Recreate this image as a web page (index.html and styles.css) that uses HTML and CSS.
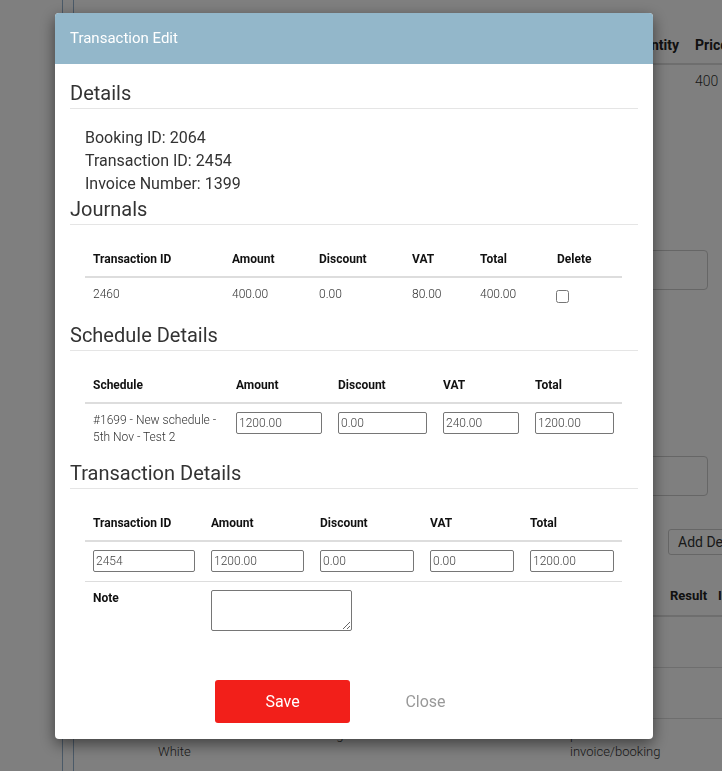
FILE: index.html
```html
<!DOCTYPE html>
<html lang="en">
<head>
    <meta charset="UTF-8">
    <meta name="viewport" content="width=device-width, initial-scale=1.0">
    <title>Transaction Edit</title>
    <link rel="stylesheet" href="styles.css">
</head>
<body>
    <!-- Pagina por tras do modal -->
    <div class="page">
        <div class="rail"></div>
        <div class="rail-inner"></div>
        <div class="content">
            <table class="bg-items">
                <thead>
                    <tr><th>Quantity</th><th>Price</th></tr>
                </thead>
                <tbody>
                    <tr><td></td><td>400</td></tr>
                </tbody>
            </table>
            <div class="side">
                <div class="bg-box"></div>
                <div class="bg-box bg-box-low"></div>
                <button class="bg-button">Add Delivery</button>
            </div>
            <div class="bg-list">
                <div class="bg-row bg-head">
                    <span></span><span></span><span></span><span></span><span>Result</span><span>Info</span>
                </div>
                <div class="bg-row"></div>
                <div class="bg-row"></div>
                <div class="bg-row bg-row-last">
                    <span></span><span><br>White</span><span class="bg-hint">Log</span><span>paid<br>invoice/booking</span><span></span><span></span>
                </div>
            </div>
        </div>
    </div>

    <div class="backdrop"></div>

    <!-- Modal de edicao -->
    <div class="modal">
        <div class="modal-header">Transaction Edit</div>
        <div class="modal-body">
            <h3 class="section-title">Details</h3>
            <div class="details">
                <div>Booking ID: 2064</div>
                <div>Transaction ID: 2454</div>
                <div>Invoice Number: 1399</div>
            </div>

            <h3 class="section-title">Journals</h3>
            <table class="grid journals">
                <colgroup><col><col><col><col><col><col></colgroup>
                <thead>
                    <tr><th>Transaction ID</th><th>Amount</th><th>Discount</th><th>VAT</th><th>Total</th><th>Delete</th></tr>
                </thead>
                <tbody>
                    <tr>
                        <td>2460</td><td>400.00</td><td>0.00</td><td>80.00</td><td>400.00</td>
                        <td><input type="checkbox" class="check"></td>
                    </tr>
                </tbody>
            </table>

            <h3 class="section-title">Schedule Details</h3>
            <table class="grid schedule">
                <colgroup><col><col><col><col><col></colgroup>
                <thead>
                    <tr><th>Schedule</th><th>Amount</th><th>Discount</th><th>VAT</th><th>Total</th></tr>
                </thead>
                <tbody>
                    <tr>
                        <td>#1699 - New schedule - 5th Nov - Test 2</td>
                        <td><input type="text" class="field" value="1200.00"></td>
                        <td><input type="text" class="field" value="0.00"></td>
                        <td><input type="text" class="field" value="240.00"></td>
                        <td><input type="text" class="field" value="1200.00"></td>
                    </tr>
                </tbody>
            </table>

            <h3 class="section-title">Transaction Details</h3>
            <table class="grid transaction">
                <colgroup><col><col><col><col><col></colgroup>
                <thead>
                    <tr><th>Transaction ID</th><th>Amount</th><th>Discount</th><th>VAT</th><th>Total</th></tr>
                </thead>
                <tbody>
                    <tr class="input-row">
                        <td><input type="text" class="field" value="2454"></td>
                        <td><input type="text" class="field" value="1200.00"></td>
                        <td><input type="text" class="field" value="0.00"></td>
                        <td><input type="text" class="field" value="0.00"></td>
                        <td><input type="text" class="field" value="1200.00"></td>
                    </tr>
                    <tr>
                        <th>Note</th>
                        <td colspan="4"><textarea class="note"></textarea></td>
                    </tr>
                </tbody>
            </table>
        </div>
        <div class="modal-footer">
            <button class="btn btn-save">Save</button>
            <button class="btn btn-close">Close</button>
        </div>
    </div>
</body>
</html>
```

FILE: styles.css
```css
/* Base */
body {
    font-family: Roboto, "Liberation Sans", sans-serif;
    background-color: #fff;
    color: #333;
    margin: 0;
    padding: 0;
    overflow: hidden;
}

/* Pagina de fundo */
.page {
    display: flex;
    height: 771px;
    overflow: hidden;
}

.rail {
    width: 62px;
    flex: none;
    border-right: 1px solid #97b4d0;
}

.rail-inner {
    width: 10px;
    flex: none;
    border-right: 1px solid #97b4d0;
}

.content {
    flex: none;
    width: 760px;
}

.bg-items {
    margin: 27px 0 0 544px;
    border-collapse: collapse;
    font-size: 14px;
}

.bg-items th {
    text-align: left;
    font-weight: 700;
    color: #222;
    padding: 8px;
    line-height: 20px;
    border-bottom: 2px solid #ddd;
}

.bg-items td {
    font-weight: 300;
    padding: 6px 8px;
    line-height: 20px;
}

.side {
    margin-left: 540px;
    display: flex;
    flex-direction: column;
    align-items: flex-start;
}

.bg-box {
    width: 94px;
    height: 40px;
    margin-top: 153px;
    border: 1px solid #ccc;
    border-radius: 4px;
    box-sizing: border-box;
}

.bg-box-low {
    margin-top: 166px;
}

.bg-button {
    margin: 33px 0 0 54px;
    height: 26px;
    padding: 0 9px;
    font-family: inherit;
    font-size: 14px;
    color: #333;
    background-color: #fff;
    border: 1px solid #ccc;
    border-radius: 3px;
    white-space: nowrap;
}

.bg-list {
    margin-top: 21px;
    font-size: 13px;
}

.bg-row {
    display: grid;
    grid-template-columns: 84px 112px 300px 100px 48px 60px;
    height: 50px;
    border-bottom: 1px solid #ddd;
}

.bg-head {
    height: 39px;
    line-height: 39px;
    font-weight: 700;
    color: #222;
    border-bottom: 2px solid #ddd;
}

.bg-row-last {
    padding-top: 7px;
    line-height: 17px;
    font-weight: 300;
    border-bottom: none;
    white-space: nowrap;
}

.bg-hint {
    padding-left: 52px;
}

.backdrop {
    position: fixed;
    top: 0;
    left: 0;
    width: 100%;
    height: 100%;
    background-color: rgba(0, 0, 0, 0.5);
}

/* Modal */
.modal {
    position: fixed;
    top: 13px;
    left: 55px;
    width: 598px;
    background-color: #fff;
    border-radius: 4px;
    box-shadow: 0 5px 15px rgba(0, 0, 0, 0.5);
    overflow: hidden;
}

.modal-header {
    background-color: #93b7ca;
    color: #fff;
    font-size: 15px;
    height: 51px;
    line-height: 51px;
    padding: 0 15px;
}

.modal-body {
    padding: 18px 15px 0;
}

.section-title {
    font-size: 20px;
    font-weight: 400;
    line-height: 22px;
    color: #333;
    margin: 0 0 17px;
    padding-bottom: 4px;
    border-bottom: 1px solid #e5e5e5;
}

.details {
    margin: 0 15px 3px;
    font-size: 16px;
    line-height: 23px;
}

/* Tabelas */
.grid {
    width: 537px;
    margin: 0 15px 8px;
    border-collapse: collapse;
    table-layout: fixed;
    font-size: 12px;
    line-height: 17px;
}

.grid th {
    text-align: left;
    font-weight: 700;
    color: #111;
    padding: 8px;
    vertical-align: top;
}

.grid thead th {
    padding-top: 9px;
    border-bottom: 2px solid #ddd;
}

.grid td {
    font-weight: 300;
    padding: 8px;
    vertical-align: top;
}

.grid .input-row td {
    padding-bottom: 9px;
}

.grid tbody tr + tr td,
.grid tbody tr + tr th {
    border-top: 1px solid #ddd;
}

.journals col:nth-child(1) { width: 139px; }
.journals col:nth-child(2) { width: 87px; }
.journals col:nth-child(3) { width: 93px; }
.journals col:nth-child(4) { width: 68px; }
.journals col:nth-child(5) { width: 77px; }
.journals col:nth-child(6) { width: 73px; }

.schedule col:nth-child(1) { width: 143px; }
.schedule col:nth-child(2) { width: 102px; }
.schedule col:nth-child(3) { width: 105px; }
.schedule col:nth-child(4) { width: 92px; }
.schedule col:nth-child(5) { width: 95px; }

.transaction col:nth-child(1) { width: 118px; }
.transaction col:nth-child(2) { width: 109px; }
.transaction col:nth-child(3) { width: 110px; }
.transaction col:nth-child(4) { width: 100px; }
.transaction col:nth-child(5) { width: 100px; }

.check {
    display: block;
    width: 13px;
    height: 13px;
    margin: 4px 0 5px -1px;
}

.field {
    display: block;
    width: 100%;
    height: 22px;
    box-sizing: border-box;
    margin: 0;
    padding: 0 2px;
    border: 1px solid #767676;
    border-radius: 2px;
    font-family: inherit;
    font-size: 12px;
    font-weight: 300;
    color: #444;
}

.note {
    display: block;
    width: 141px;
    height: 41px;
    box-sizing: border-box;
    margin: 0;
    border: 1px solid #767676;
    border-radius: 2px;
    font-family: inherit;
    font-size: 12px;
}

/* Rodape */
.modal-footer {
    display: flex;
    justify-content: center;
    gap: 8px;
    padding: 33px 15px 16px;
}

.btn {
    width: 135px;
    height: 43px;
    font-family: inherit;
    font-size: 16px;
    border: none;
    border-radius: 3px;
    cursor: pointer;
}

.btn-save {
    background-color: #f21f1a;
    color: #fff;
}

.btn-close {
    background-color: transparent;
    color: #999;
}
```
